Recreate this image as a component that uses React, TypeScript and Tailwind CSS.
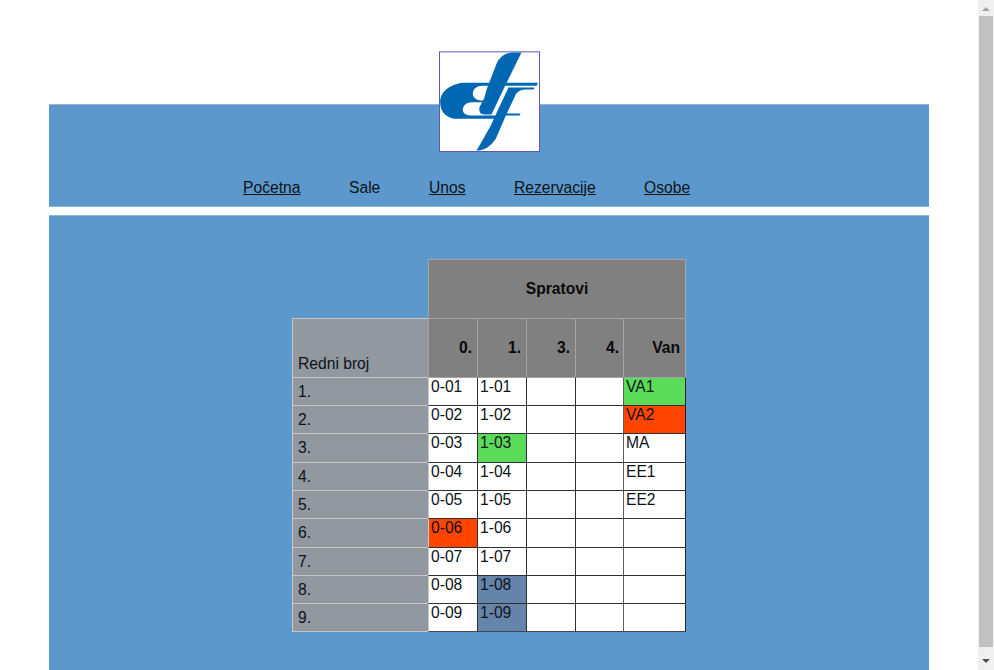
type Row = { cells: string[]; height: string };

const rows: Row[] = [
  { cells: ['0-01', '1-01', '', '', 'VA1'], height: 'h-[28px]' },
  { cells: ['0-02', '1-02', '', '', 'VA2'], height: 'h-[28px]' },
  { cells: ['0-03', '1-03', '', '', 'MA'], height: 'h-[29px]' },
  { cells: ['0-04', '1-04', '', '', 'EE1'], height: 'h-[28px]' },
  { cells: ['0-05', '1-05', '', '', 'EE2'], height: 'h-[28px]' },
  { cells: ['0-06', '1-06', '', '', ''], height: 'h-[29px]' },
  { cells: ['0-07', '1-07', '', '', ''], height: 'h-[28px]' },
  { cells: ['0-08', '1-08', '', '', ''], height: 'h-[28px]' },
  { cells: ['0-09', '1-09', '', '', ''], height: 'h-[28px]' },
];

const fills: Record<string, string> = {
  VA1: 'bg-[#5adb5a]',
  '1-03': 'bg-[#5adb5a]',
  VA2: 'bg-[#ff4500]',
  '0-06': 'bg-[#ff4500]',
  '1-08': 'bg-[#6584aa]',
  '1-09': 'bg-[#6584aa]',
};

const columns = 'grid grid-cols-[136px_49px_49px_49px_49px_61px]';

function Logo() {
  return (
    <svg className="block h-[101px] w-[101px]" viewBox="28.5 28.5 303 303">
      <rect x="30" y="31" width="300" height="299" fill="#fff" stroke="#5a5abc" strokeWidth="3" />
      <g fill="#0068b3">
        <path d="M110 124 L325 124 L322 133 L160 133 C142 133 130 143 130 156 C130 169 141 177 158 177 L172 177 L169 182 L128 182 C111 182 100 192 100 205 C100 215 109 222 123 222 L202 222 L198 232 L84 232 C53 232 32 213 32 182 C32 148 67 124 110 124 Z" />
        <path d="M276 33 L250 33 Q215 34 201 67 L172 142 L164 170 L150 197 Q146 219 166 219 L186 219 L227 133 Z" />
        <path d="M314 138 L237 138 L202 212 L184 252 L141 328 Q176 327 199 292 L229 222 L270 222 L273 216 L232 216 L256 165 Q263 145 287 144 L313 144 Z" />
      </g>
    </svg>
  );
}

function ScrollBar() {
  return (
    <div className="flex h-full w-4 shrink-0 flex-col items-center bg-[#f0f0f0]">
      <svg className="h-4 w-4 shrink-0" viewBox="0 0 16 16">
        <path d="M4 11 L8 7 L12 11 Z" fill="#a3a3a3" />
      </svg>
      <div className="h-[631px] w-[14px] bg-[#c1c1c1]" />
      <svg className="mt-[6px] h-4 w-4 shrink-0" viewBox="0 0 16 16">
        <path d="M4 6 L12 6 L8 10 Z" fill="#505050" />
      </svg>
    </div>
  );
}

export default function App() {
  return (
    <div className="flex h-[670px] w-[994px] overflow-hidden bg-white font-['Liberation_Sans',Arial,sans-serif] text-[15.65px] leading-[18px] text-[#0e1317]">
      <div className="flex w-[978px] flex-col pr-[49px] pl-[49px]">
        <header className="mt-[104px] h-[103px] shrink-0 border-y border-[#8bb5da] bg-[#5c98cb]">
          <div className="-mt-[54px] ml-[390px] w-[101px]">
            <Logo />
          </div>
          <nav className="mt-[27px] ml-[194px] flex">
            <a className="w-[106px] underline">Početna</a>
            <a className="w-[80px]">Sale</a>
            <a className="w-[85px] underline">Unos</a>
            <a className="w-[130px] underline">Rezervacije</a>
            <a className="underline">Osobe</a>
          </nav>
        </header>
        <main className="mt-2 grow border-t border-[#8bb5da] bg-[#5c98cb] pt-[43px] pl-[243px]">
          <div className="w-[394px]">
            <div className={columns}>
              <div />
              <div className="col-span-5 -mr-px h-[59px] border border-b-0 border-[#a8a3a3] bg-[#808080] pt-[20px] text-center font-bold text-[#0a0a0a]">
                Spratovi
              </div>
            </div>
            <div className={`${columns} h-[59px]`}>
              <div className="border-t border-l border-[#c4c8cc] bg-[#91989f] pt-[36px] pl-[5px]">Redni broj</div>
              {['0.', '1.', '3.', '4.', 'Van'].map((title) => (
                <div
                  key={title}
                  className="border-t border-l border-[#a8a3a3] bg-[#808080] pt-[20px] pr-[5px] text-right font-bold text-[#0a0a0a] last:-mr-px last:-ml-px last:border-r"
                >
                  {title}
                </div>
              ))}
            </div>
            {rows.map((row, r) => (
              <div key={r} className={`${columns} ${row.height}`}>
                <div className={`border-t border-l border-[#c4c8cc] bg-[#91989f] pt-[5px] pl-[5px] ${r === 8 ? '-mb-px border-b' : ''}`}>
                  {r + 1}.
                </div>
                {row.cells.map((label, c) => (
                  <div
                    key={c}
                    className={`border-t pl-[2px] ${fills[label] ?? 'bg-white'} ${
                      c === 0
                        ? 'border-l border-l-[#c4c8cc]'
                        : c === 4
                          ? '-mr-px -ml-px border-r border-l border-r-[#202020] border-l-[#606060]'
                          : 'border-l border-l-[#303030]'
                    } ${r === 0 ? 'border-t-[#a8a3a3]' : 'border-t-[#303030]'} ${
                      r === 8 ? '-mb-px border-b border-b-[#404850]' : ''
                    }`}
                  >
                    {label}
                  </div>
                ))}
              </div>
            ))}
          </div>
        </main>
      </div>
      <ScrollBar />
    </div>
  );
}
